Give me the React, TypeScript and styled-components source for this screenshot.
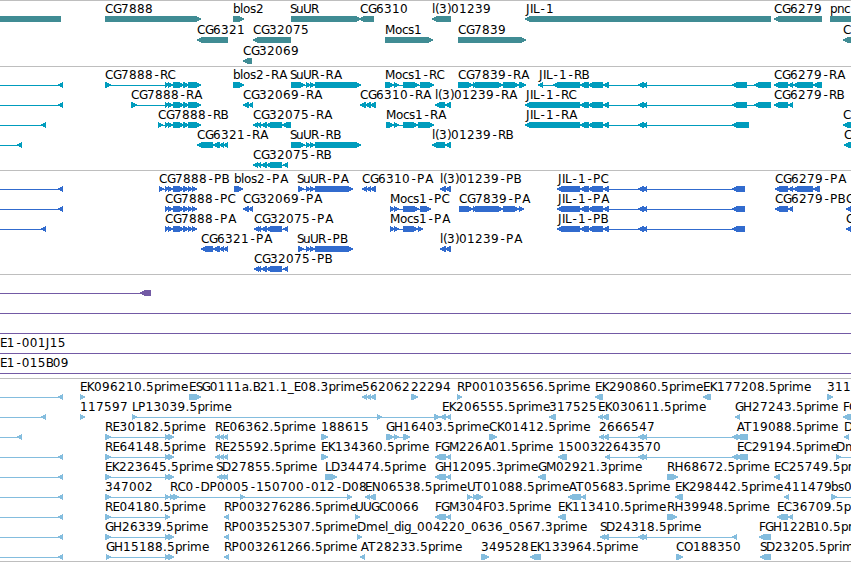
import React from 'react'
import styled, {createGlobalStyle} from 'styled-components'

const GlobalStyle = createGlobalStyle`
  body {
    margin: 0;
    background: #fff;
    overflow: hidden;
  }
`
const Panel = styled.main`
  display: flex;
  flex-direction: column;
  width: 851px;
  height: 562px;
  overflow: hidden;
  background: #fff;
`
const Track = styled.section<{$color: string; $gap: number}>`
  display: flex;
  flex-direction: column;
  flex-shrink: 0;
  border-top: 1px solid #bebebe;
  padding-bottom: ${(p) => p.$gap}px;
  color: ${(p) => p.$color};
`
const Row = styled.svg<{$height: number}>`
  display: block;
  width: 851px;
  height: ${(p) => p.$height}px;
  overflow: visible;
`
const Name = styled.text`
  fill: #000;
  font-family: 'DejaVu Sans', sans-serif;
  font-size: 12px;
  font-kerning: none;
`
const Exon = styled.polygon`
  fill: currentColor;
  shape-rendering: crispEdges;
`
const Intron = styled.rect`
  fill: currentColor;
  shape-rendering: crispEdges;
`
const EndRule = styled.div`
  height: 1px;
  flex-shrink: 0;
  background: #bebebe;
`

type Span = [number, number]
type Feature = {name: string; x: number; dir: 'l' | 'r'; exons: Span[]; line?: Span}

const left = (name: string, x: number, exons: Span[], line?: Span): Feature => ({name, x, dir: 'l', exons, line})
const right = (name: string, x: number, exons: Span[], line?: Span): Feature => ({name, x, dir: 'r', exons, line})

// advance of every character in a label, digits take 8px
const ADVANCE: Record<string, number> = {
  '-': 7, '.': 4, '(': 4, ')': 4, _: 6,
  A: 8, B: 7, C: 8, D: 9, E: 6.8, F: 6, G: 8, H: 9, I: 3, J: 4, K: 7.2, L: 6, M: 10,
  N: 9, O: 9, P: 7.5, R: 7.6, S: 6, T: 8, U: 8,
  a: 7, b: 7, c: 6, d: 7, e: 7, g: 7, i: 3, l: 3, m: 12, n: 7, o: 7, p: 7, r: 5, s: 6, u: 7,
}
// characters that sit a little right of their cell's left edge
const NUDGE: Record<string, number> = {'-': 1.6, A: 0.7}

const glyphPositions = (name: string, x: number) => {
  let at = x
  return name
    .split('')
    .map((c) => {
      const pos = at + (NUDGE[c] || 0)
      at += ADVANCE[c] || 8
      return pos.toFixed(1)
    })
    .join(' ')
}

// box with a blunt arrow tip, 6px high around y = 18
const exonPoints = ([a, b]: Span, dir: 'l' | 'r') => {
  const tip = Math.min(5, b - a)
  return dir === 'l'
    ? `${a},17.4 ${a + tip},15 ${b},15 ${b},21 ${a + tip},21 ${a},18.6`
    : `${a},15 ${b - tip},15 ${b},17.4 ${b},18.6 ${b - tip},21 ${a},21`
}

// the tail of the neighbouring gene that enters from the left edge
const tail = (end: number) => left('', 0, [[end - 5, end]], [0, end])

const cg7888: Span[] = [[165, 169], [168, 173], [173, 184], [183, 189], [188, 195], [191, 201]]
const cg7888p: Span[] = [[165, 169], [168, 173], [173, 184], [183, 189], [188, 193], [192, 197]]
const suur: Span[] = [[291, 305], [306, 311], [310, 315], [315, 361]]
const suurP: Span[] = [[298, 304], [306, 311], [310, 315], [315, 353]]
const cg32069: Span[] = [[243, 249], [248, 253]]
const jilMid: Span[] = [[580, 589], [588, 603], [603, 609], [638, 644], [642, 647]]
const jil: Span[] = [...jilMid, [732, 747], [754, 771]]
const jilP: Span[] = [[557, 580], ...jilMid, [732, 745]]
const cg32075: Span[] = [[257, 261], [261, 267], [266, 282]]
const cg6310: Span[] = [[362, 367], [366, 371], [370, 376]]
const cg7839: Span[] = [[473, 477], [475, 503], [503, 519]]
const re: Span[] = [[105, 111], [165, 170], [168, 174]]
const re2: Span[] = [[215, 220], [219, 224], [223, 228]]
const fgm: Span[] = [[435, 446], [446, 451]]

const genes: Feature[][] = [
  [
    left('', 0, [[-6, 61]]),
    right('CG7888', 105, [[105, 201]]),
    right('blos2', 233, [[233, 244]]),
    right('SuUR', 290, [[291, 361]]),
    left('CG6310', 360, [[359, 374]]),
    left('l(3)01239', 432, [[432, 451]]),
    left('JIL-1', 526, [[525, 771]]),
    left('CG6279', 774, [[774, 822]]),
    right('pnc', 830, [[830, 870]]),
  ],
  [
    left('CG6321', 197, [[197, 228]]),
    left('CG32075', 253, [[253, 291]]),
    right('Mocs1', 385, [[385, 433]]),
    right('CG7839', 458, [[458, 526]]),
    left('C', 843, [[843, 870]]),
  ],
  [left('CG32069', 243, [[243, 252]])],
]

const transcripts: Feature[][] = [
  [
    tail(63),
    right('CG7888-RC', 105, [[105, 111], ...cg7888]),
    right('blos2-RA', 233, [[233, 244]]),
    right('SuUR-RA', 290, suur),
    right('Mocs1-RC', 385, [[385, 394], [394, 399], [403, 419], [420, 434]]),
    right('CG7839-RA', 458, [[458, 473], ...cg7839, [519, 526]]),
    left('JIL-1-RB', 539, [[538, 543], [553, 580], ...jil]),
    left('CG6279-RA', 774, [[774, 788], [788, 793], [793, 813], [813, 822]]),
  ],
  [
    tail(63),
    right('CG7888-RA', 131, [[131, 137], ...cg7888]),
    left('CG32069-RA', 243, cg32069),
    left('CG6310-RA', 360, [[360, 366], [365, 371], [370, 376]]),
    left('l(3)01239-RA', 435, [[435, 445], [445, 451]]),
    left('JIL-1-RC', 526, [[525, 580], ...jil]),
    left('CG6279-RB', 774, [[774, 788], [788, 793]]),
  ],
  [
    tail(46),
    right('CG7888-RB', 158, [[158, 163], ...cg7888]),
    left('CG32075-RA', 253, [[253, 258], ...cg32075, [282, 291]]),
    right('Mocs1-RA', 386, [[386, 394], [394, 399], [403, 418], [418, 434]]),
    left('JIL-1-RA', 526, [[525, 580], ...jilMid, [732, 749]]),
    left('C', 843, [[843, 870]]),
  ],
  [
    tail(22),
    left('CG6321-RA', 197, [[197, 213], [213, 220], [219, 224], [223, 228]]),
    right('SuUR-RB', 290, suur),
    left('l(3)01239-RB', 432, [[432, 445], [445, 451]]),
    left('C', 844, [[844, 870]]),
  ],
  [left('CG32075-RB', 253, [[253, 258], ...cg32075, [283, 288]])],
]

const proteins: Feature[][] = [
  [
    tail(63),
    right('CG7888-PB', 159, [[159, 164], ...cg7888p]),
    right('blos2-PA', 234, [[234, 243]]),
    right('SuUR-PA', 297, suurP),
    left('CG6310-PA', 362, cg6310),
    left('l(3)01239-PB', 440, [[440, 446], [445, 451]]),
    left('JIL-1-PC', 558, jilP),
    left('CG6279-PA', 775, [[775, 788], [788, 793], [793, 813], [813, 820]]),
  ],
  [
    tail(63),
    right('CG7888-PC', 165, cg7888p),
    left('CG32069-PA', 243, cg32069),
    right('Mocs1-PC', 390, [[390, 395], [394, 399], [403, 419], [420, 431]]),
    right('CG7839-PA', 459, [[459, 473], ...cg7839, [519, 524]]),
    left('JIL-1-PA', 558, jilP),
    left('CG6279-PB', 775, [[775, 788], [788, 793]]),
    left('C', 846, [[846, 870]]),
  ],
  [
    tail(46),
    right('CG7888-PA', 165, cg7888p),
    left('CG32075-PA', 254, [[254, 259], ...cg32075, [283, 288]]),
    right('Mocs1-PA', 390, [[390, 395], [394, 399], [403, 418], [418, 423]]),
    left('JIL-1-PB', 558, jilP),
    left('C', 846, [[846, 870]]),
  ],
  [
    left('CG6321-PA', 201, [[201, 213], [213, 220], [219, 224], [223, 228]]),
    right('SuUR-PB', 297, suurP),
    left('l(3)01239-PA', 440, [[440, 446], [445, 451]]),
  ],
  [left('CG32075-PB', 254, [[254, 259], ...cg32075, [283, 288]])],
]

const clones: Feature[][] = [
  [left('', 0, [[140, 151]], [0, 151])],
  [left('', 0, [], [0, 851])],
  [left('', 0, [], [0, 851])],
  [left('E1-001J15', 0, [], [0, 851])],
  [left('E1-015B09', 0, [], [0, 851])],
]

const ests: Feature[][] = [
  [
    tail(63),
    right('EK096210.5prime', 80, [[80, 85]]),
    right('ESG0111a.B21.1_E08.3prime', 189, [[189, 195], [191, 201]]),
    left('562062', 362, cg6310),
    right('22294', 411, [[411, 418]]),
    right('RP001035656.5prime', 457, [[457, 462]]),
    left('EK290860.5prime', 595, [[595, 603]]),
    left('EK177208.5prime', 703, [[703, 711]]),
    right('311', 827, [[827, 833]]),
  ],
  [
    tail(46),
    right('117597', 80, [[80, 85]]),
    right('LP13039.5prime', 132, [[132, 137], [377, 382], [434, 440]]),
    left('EK206555.5prime', 442, [[440, 446], [446, 451]]),
    left('317525', 549, [[549, 556]]),
    left('EK030611.5prime', 598, [[598, 603], [602, 609]]),
    left('GH27243.5prime', 735, [[735, 740]]),
    left('FG', 843, [[843, 870]]),
  ],
  [
    tail(22),
    right('RE30182.5prime', 105, re),
    left('RE06362.5prime', 215, re2),
    right('188615', 321, [[321, 328]]),
    right('GH16403.5prime', 386, [[386, 394], [394, 399], [403, 410]]),
    right('CK01412.5prime', 489, [[489, 497]]),
    left('2666547', 599, [[599, 604], [603, 609], [638, 644], [642, 647], [732, 738]]),
    left('AT19088.5prime', 736, [[736, 748]]),
    left('D', 844, [[844, 849]]),
  ],
  [
    tail(63),
    right('RE64148.5prime', 105, re),
    left('RE25592.5prime', 215, re2),
    right('EK134360.5prime', 321, [[321, 328]]),
    left('FGM226A01.5prime', 435, fgm),
    left('150032', 558, [[558, 567]]),
    left('2643570', 605, [[605, 610], [638, 644], [642, 647], [732, 738]]),
    left('EC29194.5prime', 737, [[736, 748]]),
    right('Dm', 836, [[836, 841]], [836, 851]),
  ],
  [
    tail(63),
    right('EK223645.5prime', 105, re),
    left('SD27855.5prime', 216, [[217, 222], [220, 225], [223, 228]]),
    right('LD34474.5prime', 325, [[325, 337]]),
    left('GH12095.3prime', 435, fgm),
    left('GM02921.3prime', 538, [[538, 546]]),
    right('RH68672.5prime', 667, [[667, 678]]),
    left('EC25749.5prime', 774, [[774, 780]]),
  ],
  [
    tail(63),
    right('347002', 105, [[105, 111], [165, 170]]),
    right('RC0-DP0005-150700-012-D08', 170, [[170, 175], [173, 179], [240, 245], [347, 352]]),
    left('EN06538.5prime', 365, [[365, 370], [369, 376]]),
    right('UT01088.5prime', 467, [[467, 472], [473, 478], [476, 483]]),
    left('AT05683.5prime', 568, [[568, 581], [581, 586]]),
    left('EK298442.5prime', 675, [[675, 683]]),
    left('411479', 784, [[784, 789]]),
    right('bs0', 831, [[831, 837]], [831, 851]),
  ],
  [
    tail(63),
    right('RE04180.5prime', 105, [[105, 111], [165, 170]]),
    left('RP003276286.5prime', 224, [[224, 229]]),
    right('UUGC0066', 355, [[355, 360]]),
    left('FGM304F03.5prime', 435, fgm),
    left('EK113410.5prime', 558, [[558, 566]]),
    right('RH39948.5prime', 667, [[667, 677]]),
    left('EC36709.5prime', 777, [[777, 788], [788, 793]]),
  ],
  [
    tail(63),
    right('GH26339.5prime', 105, re),
    left('RP003525307.5prime', 224, [[224, 229]]),
    right('Dmel_dig_004220_0636_0567.3prime', 357, [[357, 362]]),
    left('SD24318.5prime', 600, [[600, 605], [603, 609], [638, 644], [642, 647], [732, 737]]),
    left('FGH122B10.5prime', 759, [[759, 771]]),
  ],
  [
    tail(63),
    right('GH15188.5prime', 106, [[106, 111], [165, 170], [168, 174]]),
    left('RP003261266.5prime', 224, [[224, 229]]),
    left('AT28233.5prime', 360, [[360, 365]]),
    right('349528', 481, [[481, 489]]),
    left('EK133964.5prime', 530, [[530, 541]]),
    right('CO188350', 676, [[676, 683]]),
    left('SD23205.5prime', 760, [[760, 771]]),
  ],
]

const tracks = [
  {id: 'genes', color: '#408c94', pitch: 21, gap: 2, rows: genes},
  {id: 'transcripts', color: '#009cbd', pitch: 20, gap: 3, rows: transcripts},
  {id: 'proteins', color: '#316bce', pitch: 20, gap: 3, rows: proteins},
  {id: 'clones', color: '#735aa5', pitch: 20, gap: 3, rows: clones},
  {id: 'ests', color: '#84bdde', pitch: 20, gap: 2, rows: ests},
]

const FeatureGlyph = ({feature}: {feature: Feature}) => {
  const {name, x, dir, exons} = feature
  const line = feature.line || (exons.length > 1 ? [exons[0][0], exons[exons.length - 1][1]] : null)
  return (
    <g>
      {line && <Intron x={line[0]} y={18} width={line[1] - line[0]} height={1} />}
      {exons.map((exon) => (
        <Exon key={exon[0]} points={exonPoints(exon, dir)} />
      ))}
      {name && (
        <Name x={glyphPositions(name, x)} y={12}>
          {name}
        </Name>
      )}
    </g>
  )
}

const App = () => {
  return (
    <Panel>
      <GlobalStyle />
      {tracks.map((track) => (
        <Track key={track.id} $color={track.color} $gap={track.gap}>
          {track.rows.map((row, i) => (
            <Row key={i} $height={track.pitch}>
              {row.map((feature, j) => (
                <FeatureGlyph key={j} feature={feature} />
              ))}
            </Row>
          ))}
        </Track>
      ))}
      <EndRule />
    </Panel>
  )
}

export default App
